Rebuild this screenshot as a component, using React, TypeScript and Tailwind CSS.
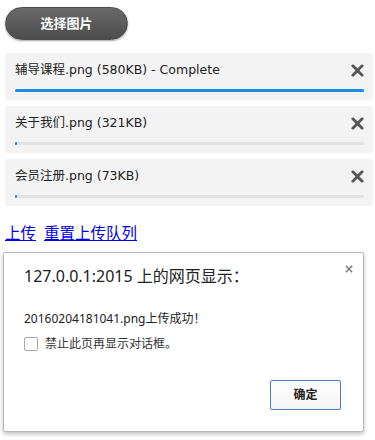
import React from "react";

const files = [
  { name: "辅导课程", info: ".png (580KB) - Complete", progress: 100 },
  { name: "关于我们", info: ".png (321KB)", progress: 0 },
  { name: "会员注册", info: ".png (73KB)", progress: 0 },
];

function CloseIcon() {
  return (
    <svg viewBox="0 0 14 14" className="h-[13px] w-[13px]">
      <path d="M2 2 L12 12 M12 2 L2 12" stroke="#555" strokeWidth="3" strokeLinecap="round" />
    </svg>
  );
}

export default function App() {
  return (
    <div
      className="h-[440px] w-[375px] overflow-hidden bg-white px-[5px] pt-[7px]"
      style={{ fontFamily: '"DejaVu Sans", "Noto Sans CJK SC", sans-serif' }}
    >
      {/* Pick button */}
      <button className="flex h-[33px] w-[123px] items-center justify-center rounded-full border border-[#4a4a4a] bg-gradient-to-b from-[#6a6a6a] to-[#4c4c4c] text-[13px] font-bold text-white shadow-[0_1px_2px_rgba(0,0,0,0.35)]">
        选择图片
      </button>

      {/* Queue */}
      <div className="mt-[13px] flex w-[368px] flex-col gap-[6px]">
        {files.map((f) => (
          <div key={f.name} className="h-[47px] rounded-[3px] bg-[#f3f3f3] pl-[10px] pr-[9px] pt-[9px]">
            <div className="flex h-[16px] items-center justify-between">
              <span className="text-[12.5px] leading-[16px] text-[#222]">
                {f.name}
                {f.info}
              </span>
              <CloseIcon />
            </div>
            <div className="mt-[11px] h-[3px] w-full rounded-full bg-[#e2e2e2]">
              <div
                className="h-[3px] rounded-full bg-[#1b8de3]"
                style={{ width: f.progress ? `${f.progress}%` : "2px" }}
              />
            </div>
          </div>
        ))}
      </div>

      {/* Links */}
      <div
        className="mt-[16px] flex gap-[8px] text-[15.5px] leading-[20px] text-[#0000ee]"
        style={{ fontFamily: '"Noto Sans CJK SC", sans-serif' }}
      >
        <a href="#" className="underline">上传</a>
        <a href="#" className="underline">重置上传队列</a>
      </div>

      {/* Alert dialog */}
      <div
        className="-ml-[2px] mt-[10px] h-[180px] w-[361px] rounded-[2px] border border-[#b9b9b9] bg-white pl-[20px] pr-[10px] pt-[12px] shadow-[0_2px_4px_rgba(0,0,0,0.25)]"
        style={{ fontFamily: '"Noto Sans", "Noto Sans CJK SC", sans-serif' }}
      >
        <div className="flex items-start justify-between">
          <div className="text-[16px] leading-[22px] text-[#222]">127.0.0.1:2015 上的网页显示：</div>
          <svg viewBox="0 0 10 10" className="h-[8px] w-[8px]">
            <path d="M1 1 L9 9 M9 1 L1 9" stroke="#777" strokeWidth="1.8" />
          </svg>
        </div>
        <div className="mt-[24px] text-[12px] leading-[16px] text-[#222]">20160204181041.png上传成功！</div>
        <label className="mt-[9px] flex items-center gap-[7px] text-[12px] leading-[16px] text-[#333]">
          <span className="h-[14px] w-[14px] rounded-[2px] border border-[#a8a8a8] bg-white" />
          禁止此页再显示对话框。
        </label>
        <div className="mt-[28px] flex justify-end pr-[12px]">
          <button className="h-[30px] w-[71px] rounded-[2px] border border-[#4d7bc0] bg-gradient-to-b from-white to-[#f4f4f4] text-[12px] font-bold text-[#222]">
            确定
          </button>
        </div>
      </div>
    </div>
  );
}
